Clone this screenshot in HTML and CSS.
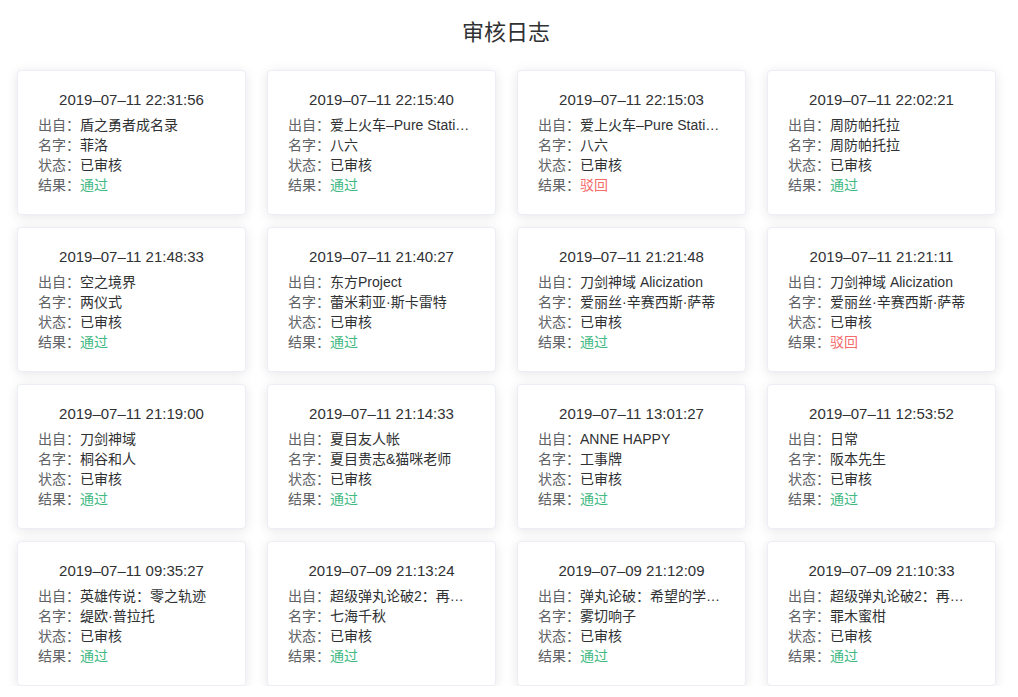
FILE: index.html
```html
<!DOCTYPE html>
<html lang="zh-CN">
<head>
    <meta charset="UTF-8">
    <meta name="viewport" content="width=device-width, initial-scale=1.0">
    <title>审核日志</title>
    <link rel="stylesheet" href="styles.css">
</head>
<body>
    <div class="page">
        <h2 class="title">审核日志</h2>
        <div class="log-list">
            <div class="log-card">
                <div class="log-time">2019–07–11 22:31:56</div>
                <div class="log-row"><span class="label">出自：</span><span class="value">盾之勇者成名录</span></div>
                <div class="log-row"><span class="label">名字：</span><span class="value">菲洛</span></div>
                <div class="log-row"><span class="label">状态：</span><span class="value">已审核</span></div>
                <div class="log-row"><span class="label">结果：</span><span class="value pass">通过</span></div>
            </div>
            <div class="log-card">
                <div class="log-time">2019–07–11 22:15:40</div>
                <div class="log-row"><span class="label">出自：</span><span class="value">爱上火车–Pure Station–</span></div>
                <div class="log-row"><span class="label">名字：</span><span class="value">八六</span></div>
                <div class="log-row"><span class="label">状态：</span><span class="value">已审核</span></div>
                <div class="log-row"><span class="label">结果：</span><span class="value pass">通过</span></div>
            </div>
            <div class="log-card">
                <div class="log-time">2019–07–11 22:15:03</div>
                <div class="log-row"><span class="label">出自：</span><span class="value">爱上火车–Pure Station–</span></div>
                <div class="log-row"><span class="label">名字：</span><span class="value">八六</span></div>
                <div class="log-row"><span class="label">状态：</span><span class="value">已审核</span></div>
                <div class="log-row"><span class="label">结果：</span><span class="value reject">驳回</span></div>
            </div>
            <div class="log-card">
                <div class="log-time">2019–07–11 22:02:21</div>
                <div class="log-row"><span class="label">出自：</span><span class="value">周防帕托拉</span></div>
                <div class="log-row"><span class="label">名字：</span><span class="value">周防帕托拉</span></div>
                <div class="log-row"><span class="label">状态：</span><span class="value">已审核</span></div>
                <div class="log-row"><span class="label">结果：</span><span class="value pass">通过</span></div>
            </div>

            <div class="log-card">
                <div class="log-time">2019–07–11 21:48:33</div>
                <div class="log-row"><span class="label">出自：</span><span class="value">空之境界</span></div>
                <div class="log-row"><span class="label">名字：</span><span class="value">两仪式</span></div>
                <div class="log-row"><span class="label">状态：</span><span class="value">已审核</span></div>
                <div class="log-row"><span class="label">结果：</span><span class="value pass">通过</span></div>
            </div>
            <div class="log-card">
                <div class="log-time">2019–07–11 21:40:27</div>
                <div class="log-row"><span class="label">出自：</span><span class="value">东方Project</span></div>
                <div class="log-row"><span class="label">名字：</span><span class="value">蕾米莉亚·斯卡雷特</span></div>
                <div class="log-row"><span class="label">状态：</span><span class="value">已审核</span></div>
                <div class="log-row"><span class="label">结果：</span><span class="value pass">通过</span></div>
            </div>
            <div class="log-card">
                <div class="log-time">2019–07–11 21:21:48</div>
                <div class="log-row"><span class="label">出自：</span><span class="value">刀剑神域 Alicization</span></div>
                <div class="log-row"><span class="label">名字：</span><span class="value">爱丽丝·辛赛西斯·萨蒂</span></div>
                <div class="log-row"><span class="label">状态：</span><span class="value">已审核</span></div>
                <div class="log-row"><span class="label">结果：</span><span class="value pass">通过</span></div>
            </div>
            <div class="log-card">
                <div class="log-time">2019–07–11 21:21:11</div>
                <div class="log-row"><span class="label">出自：</span><span class="value">刀剑神域 Alicization</span></div>
                <div class="log-row"><span class="label">名字：</span><span class="value">爱丽丝·辛赛西斯·萨蒂</span></div>
                <div class="log-row"><span class="label">状态：</span><span class="value">已审核</span></div>
                <div class="log-row"><span class="label">结果：</span><span class="value reject">驳回</span></div>
            </div>

            <div class="log-card">
                <div class="log-time">2019–07–11 21:19:00</div>
                <div class="log-row"><span class="label">出自：</span><span class="value">刀剑神域</span></div>
                <div class="log-row"><span class="label">名字：</span><span class="value">桐谷和人</span></div>
                <div class="log-row"><span class="label">状态：</span><span class="value">已审核</span></div>
                <div class="log-row"><span class="label">结果：</span><span class="value pass">通过</span></div>
            </div>
            <div class="log-card">
                <div class="log-time">2019–07–11 21:14:33</div>
                <div class="log-row"><span class="label">出自：</span><span class="value">夏目友人帐</span></div>
                <div class="log-row"><span class="label">名字：</span><span class="value">夏目贵志&amp;猫咪老师</span></div>
                <div class="log-row"><span class="label">状态：</span><span class="value">已审核</span></div>
                <div class="log-row"><span class="label">结果：</span><span class="value pass">通过</span></div>
            </div>
            <div class="log-card">
                <div class="log-time">2019–07–11 13:01:27</div>
                <div class="log-row"><span class="label">出自：</span><span class="value">ANNE HAPPY</span></div>
                <div class="log-row"><span class="label">名字：</span><span class="value">工事牌</span></div>
                <div class="log-row"><span class="label">状态：</span><span class="value">已审核</span></div>
                <div class="log-row"><span class="label">结果：</span><span class="value pass">通过</span></div>
            </div>
            <div class="log-card">
                <div class="log-time">2019–07–11 12:53:52</div>
                <div class="log-row"><span class="label">出自：</span><span class="value">日常</span></div>
                <div class="log-row"><span class="label">名字：</span><span class="value">阪本先生</span></div>
                <div class="log-row"><span class="label">状态：</span><span class="value">已审核</span></div>
                <div class="log-row"><span class="label">结果：</span><span class="value pass">通过</span></div>
            </div>

            <div class="log-card">
                <div class="log-time">2019–07–11 09:35:27</div>
                <div class="log-row"><span class="label">出自：</span><span class="value">英雄传说：零之轨迹</span></div>
                <div class="log-row"><span class="label">名字：</span><span class="value">缇欧·普拉托</span></div>
                <div class="log-row"><span class="label">状态：</span><span class="value">已审核</span></div>
                <div class="log-row"><span class="label">结果：</span><span class="value pass">通过</span></div>
            </div>
            <div class="log-card">
                <div class="log-time">2019–07–09 21:13:24</div>
                <div class="log-row"><span class="label">出自：</span><span class="value">超级弹丸论破2：再见了绝望学园</span></div>
                <div class="log-row"><span class="label">名字：</span><span class="value">七海千秋</span></div>
                <div class="log-row"><span class="label">状态：</span><span class="value">已审核</span></div>
                <div class="log-row"><span class="label">结果：</span><span class="value pass">通过</span></div>
            </div>
            <div class="log-card">
                <div class="log-time">2019–07–09 21:12:09</div>
                <div class="log-row"><span class="label">出自：</span><span class="value">弹丸论破：希望的学园和绝望高中生</span></div>
                <div class="log-row"><span class="label">名字：</span><span class="value">雾切响子</span></div>
                <div class="log-row"><span class="label">状态：</span><span class="value">已审核</span></div>
                <div class="log-row"><span class="label">结果：</span><span class="value pass">通过</span></div>
            </div>
            <div class="log-card">
                <div class="log-time">2019–07–09 21:10:33</div>
                <div class="log-row"><span class="label">出自：</span><span class="value">超级弹丸论破2：再见了绝望学园</span></div>
                <div class="log-row"><span class="label">名字：</span><span class="value">罪木蜜柑</span></div>
                <div class="log-row"><span class="label">状态：</span><span class="value">已审核</span></div>
                <div class="log-row"><span class="label">结果：</span><span class="value pass">通过</span></div>
            </div>
        </div>
    </div>
</body>
</html>
```

FILE: styles.css
```css
body {
    margin: 0;
    background: #fff;
    font-family: "Liberation Sans", "Noto Sans CJK SC", sans-serif;
    color: #606266;
}

.page {
    padding: 0 23px 0 17px;
}

.title {
    margin: 0;
    padding-top: 19px;
    height: 70px;
    box-sizing: border-box;
    text-align: center;
    font-size: 22px;
    font-weight: normal;
    color: #303133;
    line-height: 28px;
}

.log-list {
    display: grid;
    grid-template-columns: repeat(4, 229px);
    column-gap: 21px;
    row-gap: 12px;
}

.log-card {
    padding: 19px 20px;
    background: #fff;
    border: 1px solid #ebeef5;
    border-radius: 4px;
    box-shadow: 0 2px 12px 0 rgba(0, 0, 0, 0.1);
    font-size: 14px;
    line-height: 20px;
    overflow: hidden;
}

.log-time {
    margin: 0 0 5px;
    text-align: center;
    font-size: 15px;
    color: #303133;
}

.log-row {
    display: flex;
    white-space: nowrap;
}

.label {
    flex: none;
    color: #606266;
}

.value {
    overflow: hidden;
    text-overflow: ellipsis;
    color: #303133;
}

.pass {
    color: #42b983;
}

.reject {
    color: #f56c6c;
}
```
